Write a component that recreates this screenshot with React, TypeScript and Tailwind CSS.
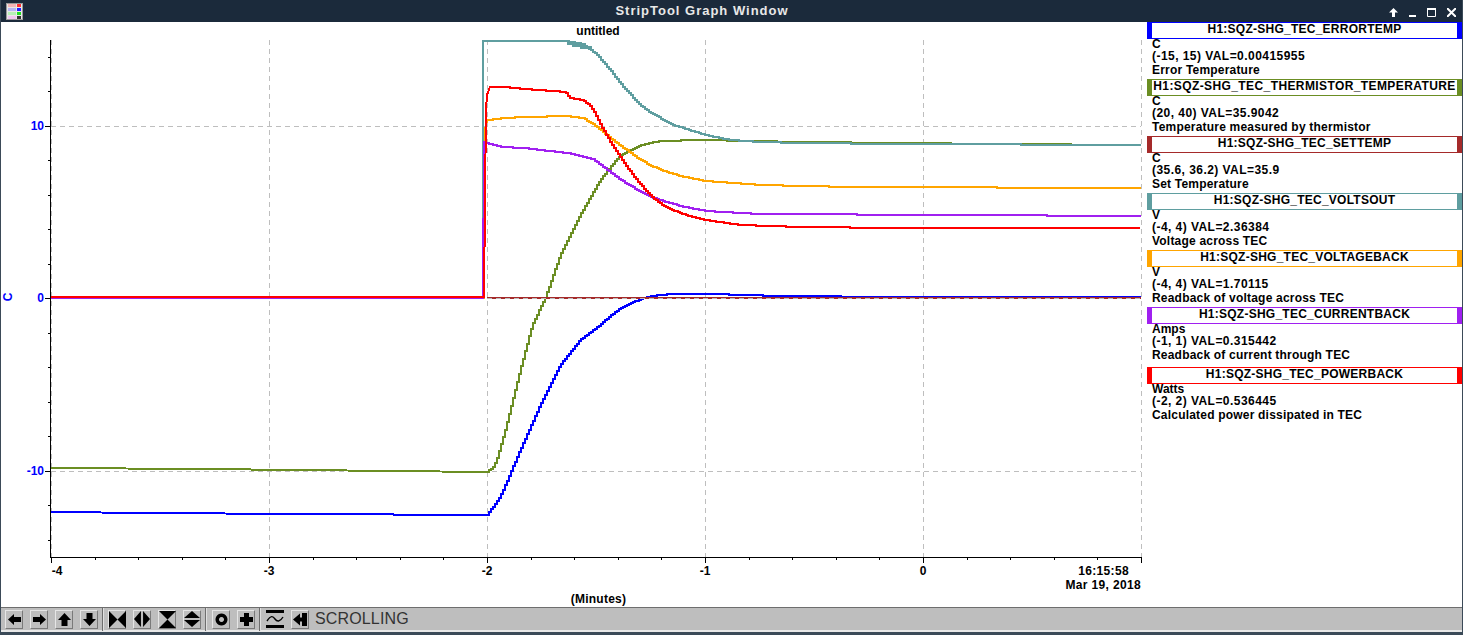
type Point = [number, number];

const traces: { color: string; points: Point[] }[] = [
  {
    color: '#0000ff',
    points: [[51, 512], [150, 513], [300, 514], [487, 515], [500, 497], [520, 450], [540, 405], [560, 365], [580, 340], [595, 329], [603, 322], [617, 310], [633, 302], [650, 296], [670, 294], [710, 294], [780, 296], [900, 297], [1141, 297]],
  },
  {
    color: '#6b8e23',
    points: [[51, 468], [200, 469], [300, 470], [487, 472], [495, 465], [505, 430], [520, 370], [532, 325], [545, 298], [560, 255], [580, 215], [600, 180], [620, 155], [640, 145], [660, 141], [700, 140], [800, 142], [1000, 144], [1141, 145]],
  },
  {
    color: '#a52a2a',
    points: [[487, 298], [1141, 298]],
  },
  {
    color: '#5f9ea0',
    points: [[51, 298], [483, 298], [483, 41], [566, 41], [583, 44], [597, 55], [610, 70], [623, 87], [643, 108], [670, 124], [705, 135], [730, 140], [760, 142], [800, 143], [900, 144], [1141, 145]],
  },
  {
    color: '#ffa500',
    points: [[51, 298], [484, 298], [485, 130], [487, 120], [503, 118], [523, 117], [567, 116], [583, 118], [597, 127], [610, 138], [640, 160], [660, 170], [680, 176], [705, 181], [760, 185], [850, 187], [1141, 188]],
  },
  {
    color: '#a020f0',
    points: [[51, 298], [483, 298], [484, 142], [487, 143], [503, 147], [523, 148], [567, 153], [593, 159], [625, 183], [650, 197], [680, 206], [705, 211], [760, 214], [1141, 216]],
  },
  {
    color: '#ff0000',
    points: [[51, 297], [484, 297], [485, 200], [486, 110], [487, 95], [490, 87], [503, 87], [523, 89], [566, 92], [569, 98], [583, 100], [592, 108], [603, 130], [620, 158], [635, 178], [650, 196], [665, 207], [685, 215], [705, 220], [740, 225], [800, 227], [900, 228], [1141, 228]],
  },
];

// the strip chart draws in whole pixels, so the lines come out as stairs.
// past the jump the samples get averaged so the decay has no corners
function stairs(points: Point[]) {
  const start = points.filter((p) => p[0] <= 492);
  const rest = points.slice(start.length - 1);
  let d = start.map((p, i) => `${i === 0 ? 'M' : 'L'}${p[0]} ${p[1]}`).join('');
  if (rest.length < 2) return d;

  const ys: number[] = [];
  const firstX = rest[0][0];
  const lastX = rest[rest.length - 1][0];
  let seg = 0;
  for (let x = firstX; x <= lastX; x++) {
    while (seg < rest.length - 2 && x > rest[seg + 1][0]) seg++;
    const [x0, y0] = rest[seg];
    const [x1, y1] = rest[seg + 1];
    ys.push(y0 + ((y1 - y0) * (x - x0)) / (x1 - x0));
  }
  for (let x = firstX + 2; x <= lastX; x += 2) {
    const i = x - firstX;
    const win = Math.min(x < 600 ? 2 : 6, i, ys.length - 1 - i);
    let sum = 0;
    for (let k = i - win; k <= i + win; k++) sum += ys[k];
    d += `H${x}V${Math.round(sum / (win * 2 + 1))}`;
  }
  return d;
}

const xTicks = Array.from({ length: 26 }, (_, i) => 51 + i * 43.6);
const yTicks = Array.from({ length: 15 }, (_, i) => 56.5 + i * 34.5);

function Chart() {
  return (
    <svg width="1147" height="585" viewBox="0 22 1147 585" className="block">
      <g stroke="#bebebe" strokeDasharray="5 4" shapeRendering="crispEdges">
        {[51, 269, 487, 705, 923, 1141].map((x) => (
          <line key={x} x1={x + 0.5} y1="40" x2={x + 0.5} y2="557" />
        ))}
        {[126, 471].map((y) => (
          <line key={y} x1="51" y1={y + 0.5} x2="1141" y2={y + 0.5} />
        ))}
      </g>
      <g fill="none" strokeWidth="2" shapeRendering="crispEdges">
        {traces.map((t) => (
          <path key={t.color} d={stairs(t.points)} stroke={t.color} />
        ))}
        <path d="M567 43H581M572 45H586M580 47H592" stroke="#5f9ea0" strokeWidth="3" />
      </g>
      <line x1="487" y1="298.5" x2="1141" y2="298.5" stroke="#bebebe" strokeDasharray="5 4" shapeRendering="crispEdges" />
      <g stroke="#000" shapeRendering="crispEdges">
        <line x1="50.5" y1="40" x2="50.5" y2="557" />
        <line x1="50" y1="557.5" x2="1142" y2="557.5" />
        {xTicks.map((x) => (
          <line key={x} x1={Math.round(x) + 0.5} y1="557" x2={Math.round(x) + 0.5} y2="560" />
        ))}
        {[51, 269, 487, 705, 923, 1141].map((x) => (
          <line key={x} x1={x + 0.5} y1="557" x2={x + 0.5} y2="563" />
        ))}
        {yTicks.map((y) => (
          <line key={y} x1="48" y1={Math.round(y) + 0.5} x2="50" y2={Math.round(y) + 0.5} />
        ))}
        {[126, 298, 471].map((y) => (
          <line key={y} x1="45" y1={y + 0.5} x2="50" y2={y + 0.5} />
        ))}
      </g>
      <g className="font-['Liberation_Sans',sans-serif] text-[12px] font-bold" fill="#0000ff" textAnchor="end">
        <text x="44" y="130">10</text>
        <text x="44" y="302">0</text>
        <text x="44" y="475">-10</text>
        <text x="12" y="297" textAnchor="middle" transform="rotate(-90 12 297)">C</text>
      </g>
      <g className="font-['Liberation_Sans',sans-serif] text-[12px] font-bold" fill="#000" textAnchor="middle">
        <text x="598" y="35">untitled</text>
        <text x="598.5" y="603" className="tracking-[0.25px]">(Minutes)</text>
        <text x="57" y="575">-4</text>
        <text x="269" y="575">-3</text>
        <text x="487" y="575">-2</text>
        <text x="705" y="575">-1</text>
        <text x="923" y="575">0</text>
        <text x="1129" y="575" textAnchor="end" className="tracking-[0.35px]">16:15:58</text>
        <text x="1141" y="589" textAnchor="end" className="tracking-[0.35px]">Mar 19, 2018</text>
      </g>
    </svg>
  );
}

const legend = [
  { name: 'H1:SQZ-SHG_TEC_ERRORTEMP', color: 'border-[#0000ff]', spacing: 'tracking-[0.25px]', unit: 'C', range: '(-15, 15) VAL=0.00415955', desc: 'Error Temperature' },
  { name: 'H1:SQZ-SHG_TEC_THERMISTOR_TEMPERATURE', color: 'border-[#6b8e23]', spacing: 'tracking-[0.4px]', unit: 'C', range: '(20, 40) VAL=35.9042', desc: 'Temperature measured by thermistor' },
  { name: 'H1:SQZ-SHG_TEC_SETTEMP', color: 'border-[#a52a2a]', spacing: 'tracking-[0.25px]', unit: 'C', range: '(35.6, 36.2) VAL=35.9', desc: 'Set Temperature' },
  { name: 'H1:SQZ-SHG_TEC_VOLTSOUT', color: 'border-[#5f9ea0]', spacing: 'tracking-[0.25px]', unit: 'V', range: '(-4, 4) VAL=2.36384', desc: 'Voltage across TEC' },
  { name: 'H1:SQZ-SHG_TEC_VOLTAGEBACK', color: 'border-[#ffa500]', spacing: 'tracking-[0.25px]', unit: 'V', range: '(-4, 4) VAL=1.70115', desc: 'Readback of voltage across TEC' },
  { name: 'H1:SQZ-SHG_TEC_CURRENTBACK', color: 'border-[#a020f0]', spacing: 'tracking-[0.25px]', unit: 'Amps', range: '(-1, 1) VAL=0.315442', desc: 'Readback of current through TEC', extra: true },
  { name: 'H1:SQZ-SHG_TEC_POWERBACK', color: 'border-[#ff0000]', spacing: 'tracking-[0.25px]', unit: 'Watts', range: '(-2, 2) VAL=0.536445', desc: 'Calculated power dissipated in TEC' },
];

function Legend() {
  return (
    <div className="w-[315px] shrink-0 font-['Liberation_Sans',sans-serif] text-[12px] font-bold leading-[14px] text-black">
      {legend.map((item) => (
        <div key={item.name} className={item.extra ? 'h-[60px]' : 'h-[57px]'}>
          <div className={`h-[17px] border-x-[5px] border-y ${item.color} ${item.spacing} text-center leading-[13px] whitespace-nowrap`}>
            {item.name}
          </div>
          <div className="-mt-px pl-[5px]">
            <div className="h-[11px] leading-[12px]">{item.unit}</div>
            <div className="tracking-[0.45px]">{item.range}</div>
            <div className="tracking-[0.2px]">{item.desc}</div>
          </div>
        </div>
      ))}
    </div>
  );
}

function ToolButton({ path, size = 15 }: { path: string; size?: number }) {
  return (
    <button className="flex h-[19px] w-[18px] items-center justify-center border-t border-l border-t-[#e6e6e6] border-l-[#e6e6e6] border-r border-b border-r-[#7a7a7a] border-b-[#7a7a7a] bg-[#bebebe]">
      <svg width={size} height={size} viewBox="0 0 15 15" className="shrink-0">
        <path d={path} fill="#000" fillRule="evenodd" />
      </svg>
    </button>
  );
}

function Separator({ last }: { last?: boolean }) {
  return <div className={`ml-[4px] ${last ? 'mr-[5px]' : 'mr-[4px]'} h-[23px] w-[2px] border-l border-l-[#6e6e6e] border-r border-r-[#e0e0e0]`} />;
}

function Toolbar() {
  return (
    <div className="flex h-[25px] items-center border-t border-t-[#6e6e6e] border-b-2 border-b-[#e8e8e8] bg-[#bebebe] pl-[4px]">
      <div className="flex gap-[7px]">
        <ToolButton path="M1 7.5 7 2V5H14V10H7V13Z" />
        <ToolButton path="M14 7.5 8 2V5H1V10H8V13Z" />
        <ToolButton path="M7.5 1 14 8H10.5V14H4.5V8H1Z" />
        <ToolButton path="M7.5 14 14 7H10.5V1H4.5V7H1Z" />
      </div>
      <Separator />
      <div className="flex gap-[7px]">
        <ToolButton size={17} path="M0 0 7.5 7.5 15 0V15L7.5 7.5 0 15Z" />
        <ToolButton size={16} path="M6.5 0V15L0 7.5ZM8.5 0V15L15 7.5Z" />
        <ToolButton size={17} path="M0 0H15L7.5 7.5 15 15H0L7.5 7.5Z" />
        <ToolButton size={16} path="M7.5 0 15 6.5H0ZM7.5 15 15 8.5H0Z" />
      </div>
      <Separator last />
      <div className="flex gap-[7px]">
        <ToolButton path="M7.5 1.5A6 6 0 1 1 7.49 1.5ZM7.5 5A2.5 2.5 0 1 0 7.51 5Z" />
        <ToolButton path="M5 1H10V5H14V10H10V14H5V10H1V5H5Z" />
      </div>
      <Separator last />
      <div className="flex gap-[7px]">
        <button className="flex h-[19px] w-[18px] items-center justify-center bg-[#bebebe]">
          <svg width="18" height="18" viewBox="0 0 18 18" fill="none" stroke="#000">
            <path d="M0 1.5H18M0 16.5H18" strokeWidth="3" />
            <path d="M1 11C5 5 7 6 9 9S14 12 17 7" strokeWidth="1.4" />
          </svg>
        </button>
        <ToolButton path="M0 7.5 7 1.5V5.5H9V1H14V14H9V9.5H7V13.5Z" />
      </div>
      <span className="ml-[6px] font-['Liberation_Sans',sans-serif] text-[16px] tracking-[0.15px] text-[#333333]">SCROLLING</span>
    </div>
  );
}

function WindowIcon() {
  return (
    <div className="ml-[5px] flex h-[17px] w-[17px] flex-col justify-center gap-[1px] border border-[#9a9a9a] bg-[#e8e8e8] px-[1px]">
      <div className="flex h-[3px] gap-[1px]"><div className="w-[9px] bg-[#f5b5b5]" /><div className="w-[4px] bg-[#ff3030]" /></div>
      <div className="flex h-[3px] gap-[1px]"><div className="w-[9px] bg-[#b5b5f5]" /><div className="w-[4px] bg-[#2020ff]" /></div>
      <div className="flex h-[3px] gap-[1px]"><div className="w-[9px] bg-[#b5f0b5]" /><div className="w-[4px] bg-[#20e020]" /></div>
      <div className="flex h-[3px] gap-[1px]"><div className="w-[9px] bg-[#f0c5f0]" /><div className="w-[4px] bg-[#333333]" /></div>
    </div>
  );
}

function TitleBar() {
  return (
    <div className="relative flex h-[22px] shrink-0 items-center justify-between bg-[#1b2a3b] pr-[6px]">
      <WindowIcon />
      <span className="absolute left-0 w-[1402px] text-center font-['Liberation_Sans',sans-serif] text-[13px] font-bold tracking-[0.99px] text-[#e8e8e8]">
        StripTool Graph Window
      </span>
      <div className="flex items-center gap-[11px] pt-[2px]">
        <svg width="9" height="9" viewBox="0 0 9 9"><path d="M4.5 0 9 4.5H6V9H3V4.5H0Z" fill="#fff" /></svg>
        <svg width="7" height="9" viewBox="0 0 7 9"><path d="M0 7H7V9H0Z" fill="#fff" /></svg>
        <svg width="9" height="9" viewBox="0 0 9 9" fill="none" stroke="#fff"><path d="M.5 1.5H8.5V8.5H.5Z" /><path d="M0 1H9" strokeWidth="2" /></svg>
        <svg width="9" height="9" viewBox="0 0 9 9" stroke="#fff" strokeWidth="2"><path d="M0 0 9 9M9 0 0 9" /></svg>
      </div>
    </div>
  );
}

export default function App() {
  return (
    <div className="flex h-[635px] w-[1463px] flex-col overflow-hidden border-x border-b-[3px] border-[#3b4a58] bg-white">
      <TitleBar />
      <div className="flex flex-1">
        <div className="w-[1147px] shrink-0 -ml-px">
          <Chart />
        </div>
        <Legend />
      </div>
      <Toolbar />
    </div>
  );
}
